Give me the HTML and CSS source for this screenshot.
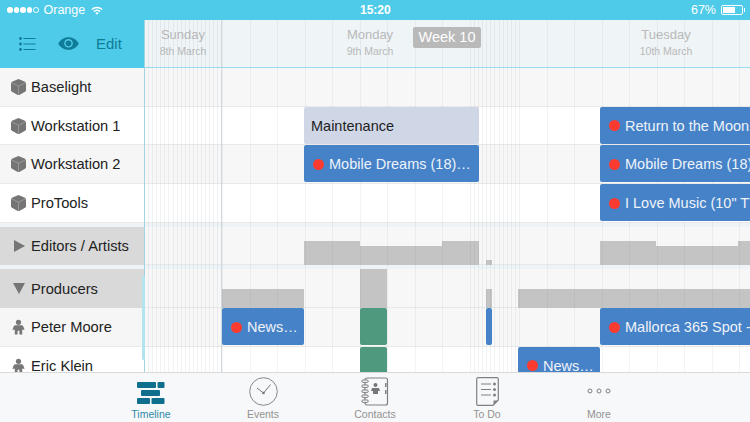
FILE: index.html
```html
<!DOCTYPE html>
<html lang="en">
<head>
  <meta charset="UTF-8">
  <title>Timeline</title>
  <link rel="stylesheet" href="styles.css">
</head>
<body>
  <svg class="defs" width="0" height="0">
    <symbol id="cube" viewBox="0 0 16 17">
      <path d="M8 0 15 3 16 4.500V12.500L15 13.500 8.800 17H7.200L1 13.500 0 12.500V4.500L1 3Z" fill="#757575"/>
      <path d="M1 4.200 8 7.600 15 4.200M8 7.600V16.500" fill="none" stroke="#a4a4a4" stroke-width=".8"/>
    </symbol>
    <symbol id="person" viewBox="0 0 14 16">
      <circle cx="7" cy="3" r="2.8" fill="#777"/>
      <path d="M3.600 6.200H10.400C11.600 6.200 12 7 12.400 8L13.600 11H11V16H8V12H6V16H3V11H.4L1.600 8C2 7 2.400 6.200 3.600 6.200Z" fill="#777"/>
    </symbol>
  </svg>

  <div class="app">
    <div class="statusBar">
      <div class="statusLeft">
        <span class="signal"><i></i><i></i><i></i><i></i><i class="off"></i></span>
        <span>Orange</span>
        <svg class="wifi" width="12" height="9" viewBox="0 0 12 9">
          <path d="M.4 3A8 8 0 0 1 11.600 3L10.600 4.100A6.500 6.500 0 0 0 1.400 4.100Z" fill="#fff"/>
          <path d="M2.400 5.100A5 5 0 0 1 9.600 5.100L8.600 6.200A3.500 3.500 0 0 0 3.400 6.200Z" fill="#fff"/>
          <path d="M4.300 7A2.400 2.400 0 0 1 7.700 7L6 8.800Z" fill="#fff"/>
        </svg>
      </div>
      <div class="statusTime">15:20</div>
      <div class="statusRight">
        <span>67%</span>
        <span class="battery"><i></i></span>
      </div>
    </div>

    <div class="main">
      <div class="sidebar">
        <div class="toolbar">
          <svg width="17" height="14" viewBox="0 0 17 14">
            <g fill="#0f7c99">
              <circle cx="1.500" cy="1.500" r="1.400"/>
              <circle cx="1.500" cy="7" r="1.400"/>
              <circle cx="1.500" cy="12.500" r="1.400"/>
              <rect x="4.500" y="1" width="12" height="1"/>
              <rect x="4.500" y="6.500" width="12" height="1"/>
              <rect x="4.500" y="12" width="12" height="1"/>
            </g>
          </svg>
          <svg class="eye" width="21" height="13" viewBox="0 0 21 13">
            <path d="M.2 6.500C2.500 2.500 6 .2 10.500 .2S18.500 2.500 20.800 6.500C18.500 10.500 15 12.800 10.500 12.800S2.500 10.500 .2 6.500Z" fill="#0f7c99"/>
            <circle cx="10.500" cy="6.300" r="4.300" fill="#4ecbe8"/>
            <circle cx="10.500" cy="6.300" r="2.900" fill="#0f7c99"/>
          </svg>
          <span class="editBtn">Edit</span>
        </div>
        <div class="rowLabel grey"><svg class="rowIcon"><use href="#cube"/></svg>Baselight</div>
        <div class="rowLabel"><svg class="rowIcon"><use href="#cube"/></svg>Workstation 1</div>
        <div class="rowLabel grey"><svg class="rowIcon"><use href="#cube"/></svg>Workstation 2</div>
        <div class="rowLabel"><svg class="rowIcon"><use href="#cube"/></svg>ProTools</div>
        <div class="rowGap"></div>
        <div class="rowLabel group"><span class="arrowRight"></span>Editors / Artists</div>
        <div class="rowGap"></div>
        <div class="rowLabel group"><span class="arrowDown"></span>Producers</div>
        <div class="rowLabel grey"><svg class="rowIcon person"><use href="#person"/></svg>Peter Moore</div>
        <div class="rowLabel"><svg class="rowIcon person"><use href="#person"/></svg>Eric Klein</div>
      </div>

      <div class="timeline">
        <div class="dayHeader">
          <div class="day sunday"><div class="dayName">Sunday</div><div class="dayDate">8th March</div></div>
          <div class="day"><div class="dayName">Monday</div><div class="dayDate">9th March</div></div>
          <div class="day"><div class="dayName">Tuesday</div><div class="dayDate">10th March</div></div>
        </div>
        <div class="weekBadge">Week 10</div>

        <div class="track grey"></div>
        <div class="track">
          <div class="event maintenance monBlock">Maintenance</div>
          <div class="event tueBlock"><span class="dot"></span>Return to the Moon</div>
        </div>
        <div class="track grey">
          <div class="event monBlock"><span class="dot"></span>Mobile Dreams (18)…</div>
          <div class="event tueBlock"><span class="dot"></span>Mobile Dreams (18) Shoot</div>
        </div>
        <div class="track">
          <div class="event tueBlock"><span class="dot"></span>I Love Music (10" TV Spot)</div>
        </div>
        <div class="rowGap"></div>
        <div class="track grey">
          <div class="load loadTall mon1"></div>
          <div class="load loadLow mon2"></div>
          <div class="load loadTall mon3"></div>
          <div class="load loadTiny nightBit"></div>
          <div class="load loadTall tue1"></div>
          <div class="load loadLow tue2"></div>
          <div class="load loadTall tue3"></div>
        </div>
        <div class="rowGap"></div>
        <div class="track grey">
          <div class="load loadMid sunBar"></div>
          <div class="load loadFull greenSlot"></div>
          <div class="load loadMid nightBit"></div>
          <div class="load loadMid tueBar"></div>
        </div>
        <div class="track grey">
          <div class="event sunEvent"><span class="dot"></span>News…</div>
          <div class="event green greenSlot"></div>
          <div class="event nightBit"></div>
          <div class="event tueBlock"><span class="dot"></span>Mallorca 365 Spot - Edit</div>
        </div>
        <div class="track">
          <div class="event green greenSlot"></div>
          <div class="event tueEarly"><span class="dot"></span>News…</div>
        </div>

        <div class="gridLayer">
          <div class="night sundayNight"></div>
          <div class="hours"></div>
          <div class="night mondayNight"></div>
          <div class="hours"></div>
        </div>
      </div>
      <div class="scrollThumb"></div>
    </div>

    <div class="tabBar">
      <div class="tab active">
        <svg width="28" height="23" viewBox="0 0 28 23">
          <g fill="#0f6f8c">
            <rect x="0" y="0" width="19" height="6" rx="1"/>
            <rect x="20.500" y="0" width="7" height="6" rx="1"/>
            <rect x="4" y="8" width="19" height="6" rx="1"/>
            <rect x="0" y="16" width="13" height="6" rx="1"/>
            <rect x="14.500" y="16" width="13" height="6" rx="1"/>
          </g>
        </svg>
        <span>Timeline</span>
      </div>
      <div class="tab">
        <svg width="29" height="29" viewBox="0 0 29 29">
          <circle cx="14.500" cy="14.500" r="13.800" fill="none" stroke="#888" stroke-width="1"/>
          <path d="M8 11 14.500 16 21.500 7.500" fill="none" stroke="#777" stroke-width="1"/>
          <circle cx="14.500" cy="16" r="1.300" fill="#777"/>
        </svg>
        <span>Events</span>
      </div>
      <div class="tab">
        <svg width="28" height="29" viewBox="0 0 28 29">
          <rect x="4" y="1" width="22.500" height="27" rx="2" fill="none" stroke="#808080" stroke-width="1.200"/>
          <g fill="#f7f8fa" stroke="#808080">
            <rect x=".8" y="3" width="6.500" height="2.400" rx="1.200"/>
            <rect x=".8" y="8" width="6.500" height="2.400" rx="1.200"/>
            <rect x=".8" y="13" width="6.500" height="2.400" rx="1.200"/>
            <rect x=".8" y="18" width="6.500" height="2.400" rx="1.200"/>
            <rect x=".8" y="23" width="6.500" height="2.400" rx="1.200"/>
          </g>
          <circle cx="14.500" cy="8" r="2" fill="#777"/>
          <path d="M11 11H18L19 14H17V17H12V14H10Z" fill="#777"/>
          <rect x="24" y="6" width="1.500" height="4" fill="#808080"/>
          <rect x="24" y="13" width="1.500" height="4" fill="#808080"/>
        </svg>
        <span>Contacts</span>
      </div>
      <div class="tab">
        <svg width="23" height="29" viewBox="0 0 23 29">
          <path d="M2 .7H21A1.300 1.300 0 0 1 22.300 2V23L17 28.300H2A1.300 1.300 0 0 1 .7 27V2A1.300 1.300 0 0 1 2 .7Z" fill="none" stroke="#808080" stroke-width="1.200"/>
          <path d="M22 23.500H17.500V28Z" fill="#808080"/>
          <g fill="#808080">
            <rect x="5" y="6.500" width="10" height="1"/>
            <rect x="5" y="12" width="10" height="1"/>
            <rect x="5" y="17.500" width="10" height="1"/>
            <circle cx="18.500" cy="7" r="1.500"/>
            <circle cx="18.500" cy="12.500" r="1.500"/>
            <circle cx="18.500" cy="18" r="1.500"/>
          </g>
        </svg>
        <span>To Do</span>
      </div>
      <div class="tab">
        <svg width="24" height="29" viewBox="0 0 24 29">
          <g fill="none" stroke="#808080">
            <circle cx="3" cy="14" r="2"/>
            <circle cx="12" cy="14" r="2"/>
            <circle cx="21" cy="14" r="2"/>
          </g>
        </svg>
        <span>More</span>
      </div>
    </div>
  </div>
</body>
</html>
```

FILE: styles.css
```css
/* Base */
body {
  margin: 0;
  font-family: "Liberation Sans", Arial, sans-serif;
  background: #fff;
  color: #222;
}
.defs {
  position: absolute;
}
.app {
  width: 750px;
  height: 422px;
  display: flex;
  flex-direction: column;
  overflow: hidden;
}

/* Status bar */
.statusBar {
  height: 20px;
  flex: none;
  background: #4ecbe8;
  color: #fff;
  font-size: 12.500px;
  display: flex;
  align-items: center;
  justify-content: space-between;
  padding: 0 7px 0 7px;
  position: relative;
}
.statusLeft, .statusRight {
  display: flex;
  align-items: center;
  gap: 5px;
}
.statusLeft .wifi {
  margin-left: 1px;
}
.signal {
  display: flex;
  gap: 1px;
}
.signal i {
  width: 5.500px;
  height: 5.500px;
  border-radius: 50%;
  background: #fff;
}
.signal i.off {
  box-sizing: border-box;
  background: none;
  border: 1px solid #fff;
}
.statusTime {
  position: absolute;
  left: 360px;
  font-size: 12px;
  font-weight: bold;
}
.battery {
  width: 22px;
  height: 10px;
  box-sizing: border-box;
  border: 1px solid #fff;
  border-radius: 2px;
  padding: 1px;
  display: flex;
  position: relative;
}
.battery i {
  width: 67%;
  background: #fff;
}
.battery::after {
  content: "";
  position: absolute;
  right: -3px;
  top: 2px;
  width: 1.500px;
  height: 4px;
  background: #fff;
}

/* Main area */
.main {
  flex: 1;
  min-height: 0;
  display: flex;
  position: relative;
  overflow: hidden;
}
.sidebar {
  width: 144px;
  flex: none;
}
.toolbar {
  height: 48px;
  box-sizing: border-box;
  background: #4ecbe8;
  display: flex;
  align-items: center;
  padding: 0 0 1px 19px;
}
.toolbar .eye {
  margin-left: 22px;
}
.editBtn {
  margin-left: 17px;
  color: #0f7c99;
  font-size: 15px;
}
.rowLabel {
  height: 38.700px;
  box-sizing: border-box;
  border-bottom: 1px solid #e9e9e9;
  background: #fff;
  display: flex;
  align-items: center;
  font-size: 14.700px;
  padding-left: 11px;
  gap: 5px;
}
.rowLabel.grey {
  background: #f6f6f6;
}
.rowLabel.group {
  background: #d9d9d9;
  border-bottom: 0;
}
.rowIcon {
  width: 15px;
  height: 16px;
  flex: none;
}
.rowIcon.person {
  width: 13px;
  padding: 0 1px;
}
.arrowRight {
  width: 0;
  height: 0;
  margin-left: 3px;
  margin-right: 1px;
  border-left: 11px solid #757575;
  border-top: 6px solid transparent;
  border-bottom: 6px solid transparent;
}
.arrowDown {
  width: 0;
  height: 0;
  margin-left: 2px;
  margin-right: 1px;
  border-top: 11px solid #757575;
  border-left: 6px solid transparent;
  border-right: 6px solid transparent;
}
.rowGap {
  height: 4px;
  background: #edf3f6;
}

/* Timeline */
.timeline {
  flex: 1;
  min-width: 0;
  position: relative;
  overflow: hidden;
}
.dayHeader {
  height: 48px;
  box-sizing: border-box;
  background: #eff4f7;
  border-bottom: 1px solid #9adcee;
  display: flex;
  color: #b9b9b9;
  text-align: center;
}
.day {
  width: 296px;
  flex: none;
  padding-top: 7px;
}
.day.sunday {
  width: 78px;
}
.dayName {
  font-size: 13px;
  line-height: 15px;
}
.dayDate {
  font-size: 10.500px;
  line-height: 13px;
  margin-top: 3px;
}
.weekBadge {
  position: absolute;
  left: 269px;
  top: 7px;
  width: 68px;
  height: 21px;
  line-height: 21px;
  border-radius: 2px;
  background: #b9b9b9;
  color: #fff;
  font-size: 14.500px;
  text-align: center;
  z-index: 3;
}
.track {
  height: 38.700px;
  box-sizing: border-box;
  border-bottom: 1px solid #e9e9e9;
  background: #fff;
  position: relative;
}
.track.grey {
  background: #f7f7f7;
}
.gridLayer {
  position: absolute;
  left: 0;
  top: 0;
  bottom: 0;
  display: flex;
  width: 606px;
  z-index: 1;
  box-shadow: inset 1px 0 0 #a6dfee;
}
.hours {
  width: 247.500px;
  flex: none;
  background: repeating-linear-gradient(to right, rgba(90,110,120,.08) 0 1px, transparent 1px 27.500px);
}
.night {
  flex: none;
  background: repeating-linear-gradient(to right, rgba(90,110,120,.09) 0 1px, transparent 1px 4.080px);
}
.sundayNight {
  width: 78px;
  border-right: 1px solid #cfd8dc;
  box-sizing: border-box;
}
.mondayNight {
  width: 49px;
}
.event {
  position: absolute;
  top: 0;
  height: 37px;
  box-sizing: border-box;
  background: #4682c8;
  border-radius: 2px;
  color: #eef3f9;
  font-size: 14.500px;
  white-space: nowrap;
  overflow: hidden;
  display: flex;
  align-items: center;
  padding: 1px 0 0 9px;
  gap: 5px;
  z-index: 2;
}
.event.maintenance {
  background: #cfd6e6;
  color: #222;
  padding-left: 7px;
}
.event.green {
  background: #4f9a7f;
  padding: 0;
}
.dot {
  width: 11px;
  height: 11px;
  flex: none;
  border-radius: 50%;
  background: #fb3b30;
}
.monBlock { left: 160px; width: 175px; }
.tueBlock { left: 456px; width: 300px; }
.sunEvent { left: 78px; width: 82px; }
.tueEarly { left: 374px; width: 82px; }
.greenSlot { left: 215.500px; width: 27px; }
.nightBit { left: 342px; width: 6px; padding: 0; }
.load {
  position: absolute;
  bottom: -1px;
  background: #c4c4c4;
}
.loadTall { height: 24px; }
.loadLow { height: 19px; }
.loadTiny { height: 5px; }
.loadMid { height: 19px; }
.loadFull { height: 39px; }
.mon1 { left: 160px; width: 55.500px; }
.mon2 { left: 215.500px; width: 82.500px; }
.mon3 { left: 298px; width: 37px; }
.tue1 { left: 456px; width: 55.500px; }
.tue2 { left: 511.500px; width: 82.500px; }
.tue3 { left: 594px; width: 12px; }
.sunBar { left: 78px; width: 82px; }
.tueBar { left: 374px; width: 232px; }
.scrollThumb {
  position: absolute;
  left: 142px;
  top: 256px;
  width: 3px;
  height: 84px;
  border-radius: 2px;
  background: #b5e4f1;
  z-index: 4;
}

/* Tab bar */
.tabBar {
  height: 50px;
  flex: none;
  box-sizing: border-box;
  border-top: 1px solid #d9d9d9;
  background: #f7f8fa;
  display: flex;
  justify-content: center;
}
.tab {
  width: 112px;
  height: 48px;
  display: flex;
  flex-direction: column;
  align-items: center;
  justify-content: space-between;
  padding-top: 4px;
  box-sizing: border-box;
  font-size: 10.500px;
  color: #929292;
}
.tab span {
  line-height: 13px;
}
.tab.active {
  color: #2f8aa6;
  padding-top: 9px;
}
```
